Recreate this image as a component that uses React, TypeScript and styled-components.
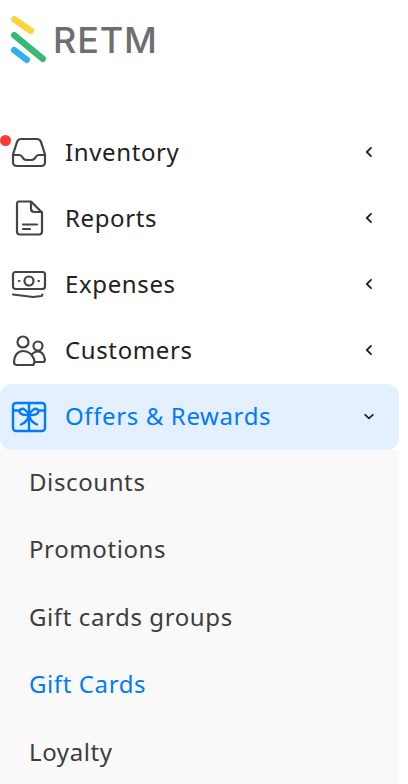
import styled, { createGlobalStyle } from 'styled-components';

const GlobalStyle = createGlobalStyle`
  html, body {
    margin: 0;
    padding: 0;
    background: #fff;
    overflow: hidden;
  }
  body {
    font-family: "Noto Sans", sans-serif;
  }
`;

const Sidebar = styled.nav`
  width: 399px;
  height: 784px;
  overflow: hidden;
  display: flex;
  flex-direction: column;
`;

const LogoRow = styled.div`
  height: 120px;
  flex: none;
  display: flex;
  align-items: flex-start;
  gap: 7px;
  padding: 14px 0 0 10px;
  box-sizing: border-box;
`;

const LogoText = styled.span`
  margin-top: 3px;
  font-family: "Inter", sans-serif;
  font-size: 36px;
  line-height: 46px;
  font-weight: 500;
  letter-spacing: 0.8px;
  color: #6d6e71;
`;

const Row = styled.div<{ $active?: boolean }>`
  height: 66px;
  flex: none;
  box-sizing: border-box;
  display: flex;
  align-items: center;
  position: relative;
  padding: 0 24px 2px 11px;
  border-radius: 12px;
  background: ${(p) => (p.$active ? '#e4f0ff' : 'transparent')};
  color: ${(p) => (p.$active ? '#007aff' : '#222')};
`;

const IconSlot = styled.span`
  width: 36px;
  height: 36px;
  display: flex;
  flex: none;
  margin-right: 18px;
`;

const Label = styled.span`
  flex: 1;
  margin-bottom: 2px;
  font-size: 24px;
  letter-spacing: 0.62px;
  white-space: nowrap;
`;

const Dot = styled.span`
  position: absolute;
  left: 0;
  top: 15px;
  width: 11px;
  height: 11px;
  border-radius: 50%;
  background: #f93a37;
`;

const SubMenu = styled.div`
  flex: 1;
  background: #f9f9f9;
  display: flex;
  flex-direction: column;
`;

const SubItem = styled.div<{ $active?: boolean }>`
  height: 67.5px;
  flex: none;
  box-sizing: border-box;
  display: flex;
  align-items: center;
  padding: 0 0 5.5px 29px;
  font-size: 24px;
  letter-spacing: 0.6px;
  color: ${(p) => (p.$active ? '#007aff' : '#3d3d3d')};
`;

const Chevron = ({ down }: { down?: boolean }) => (
  <svg width="12" height="12" viewBox="0 0 12 12" fill="none" stroke="#222" strokeWidth="1.8" strokeLinecap="round" strokeLinejoin="round">
    {down ? <path d="M2.2 4.800 6 8.300l3.800-3.500" /> : <path d="M8 1.800 3.800 6 8 10.200" />}
  </svg>
);

const LogoMark = () => (
  <svg width="36" height="50" viewBox="0 0 36 50" fill="none" strokeWidth="6.5" strokeLinecap="round">
    <path d="M4.250 5.250 20.750 16.750" stroke="#fdd43b" />
    <path d="M4.250 21.250 32.750 44.750" stroke="#37b877" />
    <path d="M4.250 36.250 16.750 45.750" stroke="#2fb2e8" />
  </svg>
);

const stroke = {
  fill: 'none',
  stroke: '#444',
  strokeWidth: 2.2,
  strokeLinecap: 'round' as const,
  strokeLinejoin: 'round' as const,
};

const InboxIcon = () => (
  <svg width="36" height="36" viewBox="0 0 36 36" {...stroke}>
    <path d="M10 5h16c2 0 3 .8 3.800 2.400L34 20.500V28c0 2.500-1.500 4-4 4H6c-2.500 0-4-1.500-4-4v-7.500L6.200 7.400C7 5.800 8 5 10 5z" />
    <path d="M2.200 21H8.500c1.500 0 2 .6 2.800 2 .9 1.700 2 3 4 3h5.400c2 0 3.100-1.300 4-3 .8-1.400 1.300-2 2.800-2h6.300" />
  </svg>
);

const FileIcon = () => (
  <svg width="36" height="36" viewBox="0 0 36 36" {...stroke}>
    <path d="M8 1.500h12L31 12.500V31.500c0 1.800-1 3-3 3H9c-2 0-3-1.200-3-3V4c0-1.500.8-2.500 2-2.500z" />
    <path d="M20 2v6.500c0 2.200 1.300 3.500 3.500 3.500H30.500" />
    <path d="M12 24.500h14M12 29h7" />
  </svg>
);

const MoneyIcon = () => (
  <svg width="36" height="36" viewBox="0 0 36 36" {...stroke}>
    <rect x="2" y="6" width="32" height="17" rx="2.500" />
    <circle cx="18" cy="15" r="4.500" />
    <path d="M8 15h.5M27.500 15h.5" />
    <path d="M2 28.500 22 31l8.500-1c.6-.1.8-.5.8-1.500" />
  </svg>
);

const PeopleIcon = () => (
  <svg width="36" height="36" viewBox="0 0 36 36" {...stroke}>
    <circle cx="12" cy="10" r="5.500" />
    <circle cx="27" cy="14" r="4.500" />
    <path d="M3 30c0-6 3.500-11 9-11 5 0 9 3.500 11 8 1 3 .5 6-2 6H6c-2 0-3-1-3-3z" />
    <path d="M21 22c1.500-1.500 3.500-2.500 6-2.500 3.500 0 6 3.500 6.800 7.500.4 2-.5 3-2 3H23.500" />
  </svg>
);

const GiftIcon = () => (
  <svg width="36" height="36" viewBox="0 0 36 36" fill="none" stroke="#007aff" strokeWidth="2.400" strokeLinecap="round" strokeLinejoin="round">
    <rect x="2" y="5" width="32" height="28" rx="3" />
    <path d="M18 5v28M2 12.500h6M28 12.500h6" />
    <path d="M18 17c-2.500-5-6-7.500-8.500-5.500s-.5 6.500 8.500 5.500zM18 17c2.500-5 6-7.500 8.500-5.500s.5 6.500-8.500 5.500z" />
    <path d="M18 17c-1 4.500-4 8-8 9.500M18 17c1 4.500 4 8 8 9.500" />
  </svg>
);

const mainItems = [
  { label: 'Inventory', icon: <InboxIcon />, dot: true },
  { label: 'Reports', icon: <FileIcon /> },
  { label: 'Expenses', icon: <MoneyIcon /> },
  { label: 'Customers', icon: <PeopleIcon /> },
];

const subItems = ['Discounts', 'Promotions', 'Gift cards groups', 'Gift Cards', 'Loyalty'];

export default function App() {
  return (
    <Sidebar>
      <GlobalStyle />
      <LogoRow>
        <LogoMark />
        <LogoText>RETM</LogoText>
      </LogoRow>
      {mainItems.map((item) => (
        <Row key={item.label}>
          {item.dot && <Dot />}
          <IconSlot>{item.icon}</IconSlot>
          <Label>{item.label}</Label>
          <Chevron />
        </Row>
      ))}
      <Row $active>
        <IconSlot>
          <GiftIcon />
        </IconSlot>
        <Label>Offers &amp; Rewards</Label>
        <Chevron down />
      </Row>
      <SubMenu>
        {subItems.map((label) => (
          <SubItem key={label} $active={label === 'Gift Cards'}>
            {label}
          </SubItem>
        ))}
      </SubMenu>
    </Sidebar>
  );
}
